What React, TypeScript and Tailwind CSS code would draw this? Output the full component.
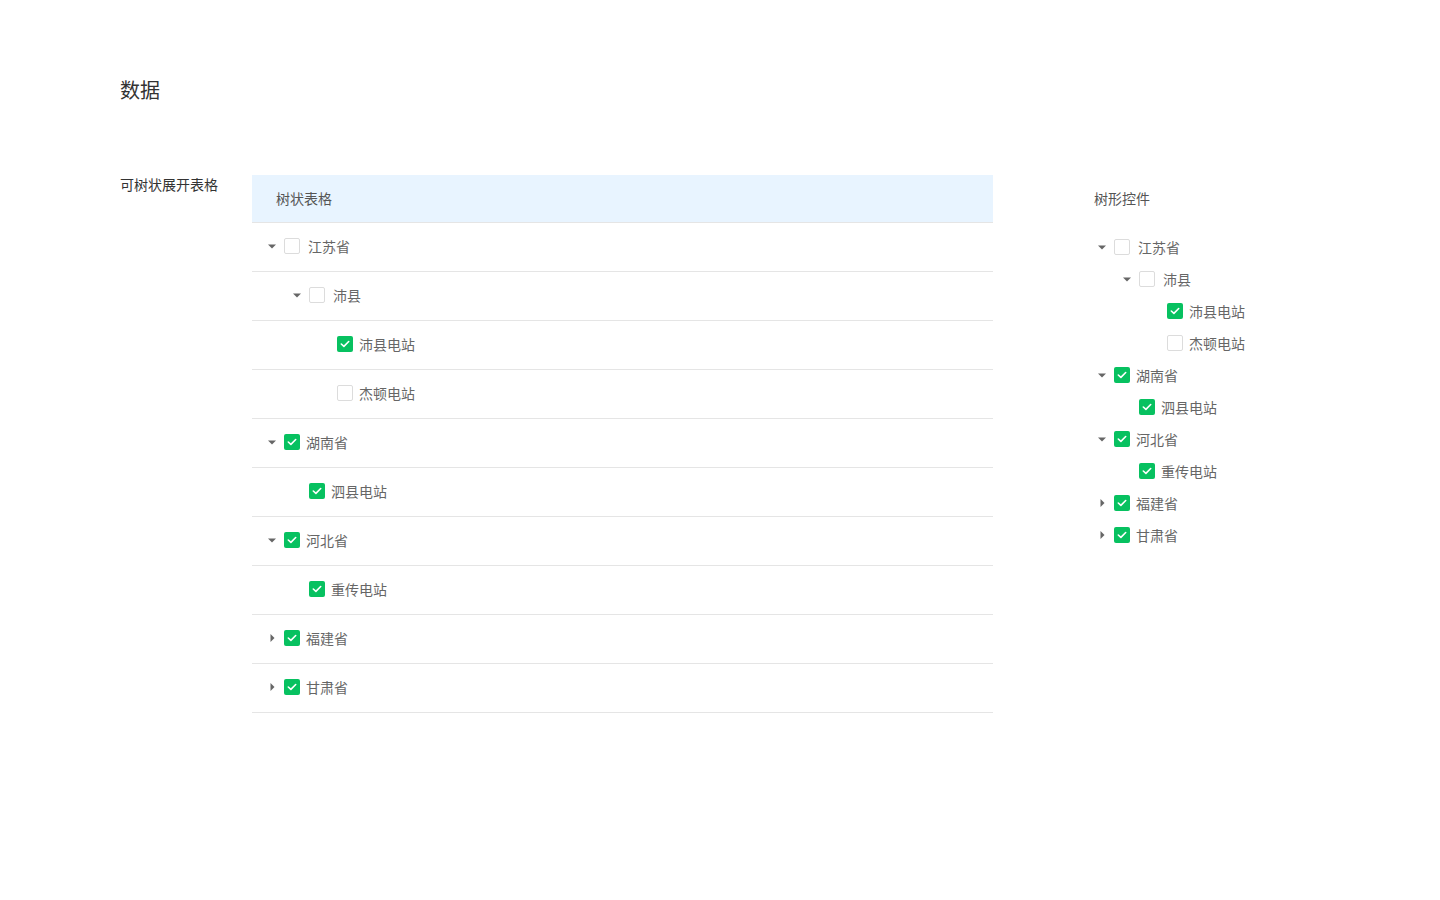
import type { ReactNode } from 'react';

type Node = {
  label: string;
  level: number;
  checked: boolean;
  caret?: 'down' | 'right';
};

const rows: Node[] = [
  { label: '江苏省', level: 0, checked: false, caret: 'down' },
  { label: '沛县', level: 1, checked: false, caret: 'down' },
  { label: '沛县电站', level: 2, checked: true },
  { label: '杰顿电站', level: 2, checked: false },
  { label: '湖南省', level: 0, checked: true, caret: 'down' },
  { label: '泗县电站', level: 1, checked: true },
  { label: '河北省', level: 0, checked: true, caret: 'down' },
  { label: '重传电站', level: 1, checked: true },
  { label: '福建省', level: 0, checked: true, caret: 'right' },
  { label: '甘肃省', level: 0, checked: true, caret: 'right' },
];

const indent = ['pl-0', 'pl-[25px]', 'pl-[53px]'];

function Caret({ dir }: { dir?: 'down' | 'right' }) {
  return (
    <span className="w-4 h-4 flex items-center justify-center shrink-0">
      {dir === 'down' && (
        <svg width="8" height="5" viewBox="0 0 8 5">
          <path d="M0 0.5 L8 0.5 L4 4.5 Z" fill="#666" />
        </svg>
      )}
      {dir === 'right' && (
        <svg width="5" height="8" viewBox="0 0 5 8">
          <path d="M0.5 0 L4.5 4 L0.5 8 Z" fill="#666" />
        </svg>
      )}
    </span>
  );
}

function Checkbox({ checked }: { checked: boolean }) {
  if (checked) {
    return (
      <span className="w-4 h-4 rounded-[2px] bg-[#07c160] flex items-center justify-center shrink-0">
        <svg width="10" height="8" viewBox="0 0 10 8">
          <path d="M1.3 4 L3.9 6.4 L8.7 1.5" stroke="#fff" strokeWidth="1.6" fill="none" strokeLinecap="round" strokeLinejoin="round" />
        </svg>
      </span>
    );
  }
  return <span className="block w-4 h-4 rounded-[2px] border border-[#dcdcdc] bg-white shrink-0" />;
}

function NodeLine({ node }: { node: Node }) {
  const wide = !node.checked && node.caret;
  return (
    <div className={`flex items-center ${indent[node.level]}`}>
      <Caret dir={node.caret} />
      <span className="ml-1 flex">
        <Checkbox checked={node.checked} />
      </span>
      <span className={`${wide ? 'ml-2' : 'ml-1.5'} text-sm text-[#666] leading-5`}>{node.label}</span>
    </div>
  );
}

function Cell({ children }: { children: ReactNode }) {
  return <div className="h-[49px] border-b border-[#e5e5e5] pl-3 pb-[2px] flex items-center">{children}</div>;
}

export default function App() {
  return (
    <div
      className="min-h-screen bg-white px-[120px] pt-[76px]"
      style={{ fontFamily: '"Noto Sans CJK SC", "Noto Sans", sans-serif' }}
    >
      <h1 className="text-xl leading-7 text-[#333]">数据</h1>

      <div className="mt-[71px] flex">
        <div className="w-[132px] shrink-0 -mt-[1px] text-sm leading-5 text-[#333]">可树状展开表格</div>

        <div className="w-[741px] shrink-0">
          <div className="h-[48px] bg-[#e8f4ff] border-b border-[#e5e5e5] pl-6 pb-[2px] flex items-center text-sm text-[#555]">
            树状表格
          </div>
          {rows.map((n, i) => (
            <Cell key={i}>
              <NodeLine node={n} />
            </Cell>
          ))}
        </div>

        <div className="ml-[101px] w-[220px]">
          <div className="h-[48px] pb-[2px] flex items-center text-sm text-[#555]">树形控件</div>
          <div className="pt-[8px]">
            {rows.map((n, i) => (
              <div key={i} className="h-8 flex items-center">
                <NodeLine node={n} />
              </div>
            ))}
          </div>
        </div>
      </div>
    </div>
  );
}
